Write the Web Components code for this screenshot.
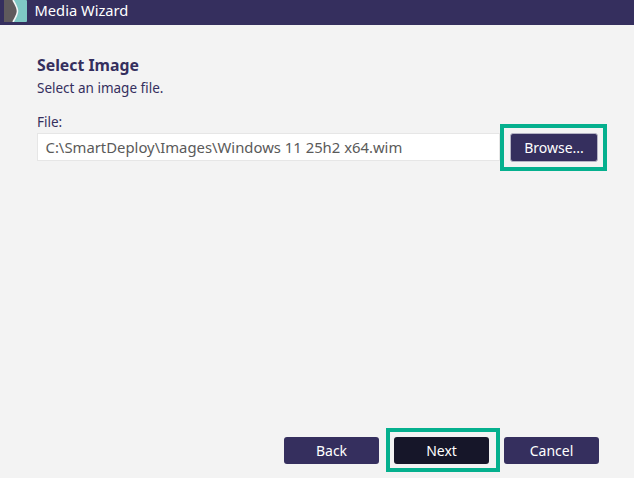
<!DOCTYPE html>
<html>
<head>
<meta charset="utf-8">
<title>Media Wizard</title>
<style>
  html, body { margin: 0; height: 100%; }
  body { overflow: hidden; font-family: "Noto Sans", "Open Sans", sans-serif; }
</style>
</head>
<body>
<wiz-window>
  <wiz-titlebar slot="top">Media Wizard</wiz-titlebar>
  <wiz-heading title="Select Image">Select an image file.</wiz-heading>
  <wiz-file-field label="File:" value="C:\SmartDeploy\Images\Windows 11 25h2 x64.wim"></wiz-file-field>
  <wiz-button slot="footer">Back</wiz-button>
  <wiz-button slot="footer" primary highlight>Next</wiz-button>
  <wiz-button slot="footer">Cancel</wiz-button>
</wiz-window>

<script>
class WizWindow extends HTMLElement {
  constructor() {
    super();
    this.attachShadow({ mode: 'open' });
    this.shadowRoot.innerHTML = `
      <style>
        :host {
          display: flex;
          flex-direction: column;
          width: 634px;
          height: 478px;
          background: #f3f3f3;
        }
        .body {
          flex: 1;
          padding: 30px 36px 0 37px;
        }
        .footer {
          display: flex;
          justify-content: flex-end;
          gap: 15px;
          padding: 0 35px 14px 0;
        }
      </style>
      <slot name="top"></slot>
      <div class="body"><slot></slot></div>
      <div class="footer"><slot name="footer"></slot></div>
    `;
  }
}

class WizTitlebar extends HTMLElement {
  constructor() {
    super();
    this.attachShadow({ mode: 'open' });
    this.shadowRoot.innerHTML = `
      <style>
        :host {
          display: flex;
          align-items: flex-start;
          height: 25px;
          background: #352f5e;
          color: #fff;
          font-size: 14.7px;
          line-height: 21px;
        }
        svg { display: block; margin-left: 4px; }
        .text { margin-left: 7.5px; }
      </style>
      <svg width="23" height="22" viewBox="0 0 23 22">
        <rect width="23" height="22" rx="1" fill="#7fc8c4"/>
        <path d="M0 0H9C12 5 13.5 8 13.5 11C13.5 14 12 17 9 22H0Z" fill="#5f5a5c"/>
        <path d="M9 0C12 5 13.5 8 13.5 11C13.5 14 12 17 9 22" fill="none" stroke="#f2f5f5" stroke-width="1.6"/>
      </svg>
      <span class="text"><slot></slot></span>
    `;
  }
}

class WizHeading extends HTMLElement {
  constructor() {
    super();
    this.attachShadow({ mode: 'open' });
    this.shadowRoot.innerHTML = `
      <style>
        :host { display: block; color: #352f5e; }
        .title { font-size: 15.8px; font-weight: 700; line-height: 20px; }
        .sub { font-size: 13.5px; line-height: 18px; margin-top: 4px; }
      </style>
      <div class="title"></div>
      <div class="sub"><slot></slot></div>
    `;
    this.shadowRoot.querySelector('.title').textContent = this.getAttribute('title');
  }
}

class WizFileField extends HTMLElement {
  constructor() {
    super();
    this.attachShadow({ mode: 'open' });
    this.shadowRoot.innerHTML = `
      <style>
        :host { display: block; margin-top: 16px; font-size: 13.5px; }
        .label { color: #352f5e; line-height: 18px; }
        .row {
          display: flex;
          align-items: flex-start;
          gap: 10px;
          margin-top: 2px;
        }
        .input {
          flex: 1;
          box-sizing: border-box;
          height: 28px;
          padding-left: 7.5px;
          background: #fff;
          border: 1px solid #e6e6e6;
          color: #5a5a5a;
          font-size: 14.85px;
          line-height: 26px;
          white-space: nowrap;
        }
      </style>
      <div class="label"></div>
      <div class="row">
        <div class="input"></div>
        <wiz-button small highlight>Browse...</wiz-button>
      </div>
    `;
    this.shadowRoot.querySelector('.label').textContent = this.getAttribute('label');
    this.shadowRoot.querySelector('.input').textContent = this.getAttribute('value');
  }
}

class WizButton extends HTMLElement {
  constructor() {
    super();
    this.attachShadow({ mode: 'open' });
    this.shadowRoot.innerHTML = `
      <style>
        :host {
          display: block;
          position: relative;
          box-sizing: border-box;
          width: 95px;
          height: 27px;
          border-radius: 3px;
          background: #352f5e;
          color: #fff;
          font-size: 14px;
          line-height: 27px;
          text-align: center;
        }
        :host([primary]) { background: #161629; }
        :host([small]) {
          width: 88px;
          height: 29px;
          line-height: 27px;
          border: 1px solid #b5b3c4;
        }
        :host([highlight])::after {
          content: "";
          position: absolute;
          inset: -9px -11px -8px -8px;
          border: 4px solid #05b08e;
        }
        :host([small][highlight])::after {
          inset: -10px -10px -10px -11px;
        }
      </style>
      <slot></slot>
    `;
  }
}

customElements.define('wiz-button', WizButton);
customElements.define('wiz-window', WizWindow);
customElements.define('wiz-titlebar', WizTitlebar);
customElements.define('wiz-heading', WizHeading);
customElements.define('wiz-file-field', WizFileField);
</script>
</body>
</html>
